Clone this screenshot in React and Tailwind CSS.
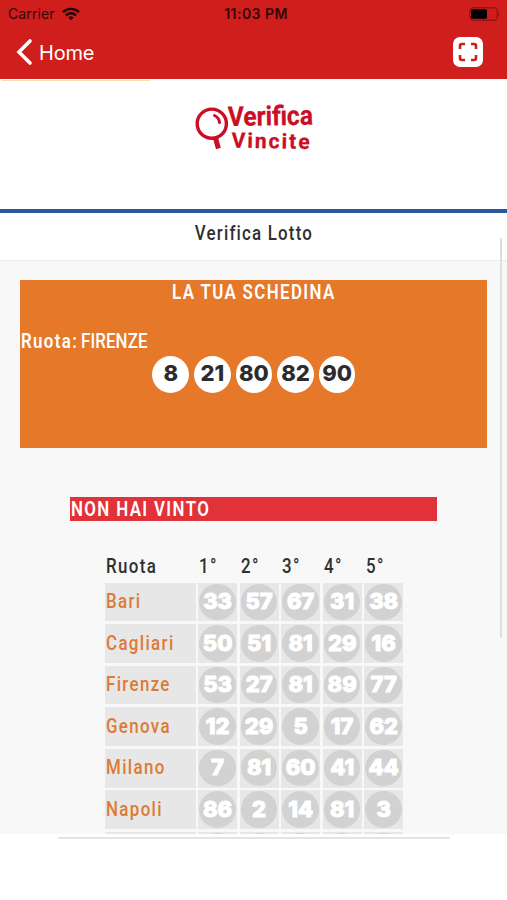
import React from "react";

const rows = [
  ["Bari", [33, 57, 67, 31, 38]],
  ["Cagliari", [50, 51, 81, 29, 16]],
  ["Firenze", [53, 27, 81, 89, 77]],
  ["Genova", [12, 29, 5, 17, 62]],
  ["Milano", [7, 81, 60, 41, 44]],
  ["Napoli", [86, 2, 14, 81, 3]],
  ["", ["", "", "", "", ""]],
];

function Condensed({ children, className = "" }) {
  return (
    <span className={`inline-block whitespace-nowrap font-['Roboto',sans-serif] text-[20px] leading-6 tracking-[1.6px] scale-x-[0.845] ${className}`}>
      {children}
    </span>
  );
}

function StatusBar() {
  return (
    <div className="flex h-[27px] items-center justify-between pl-[8px] pr-[6px] text-[#360606]">
      <div className="flex w-[120px] items-center gap-[7px]">
        <span className="text-[14px] tracking-[0.1px]">Carrier</span>
        <svg width="18" height="14" viewBox="0 0 18 14" fill="none" stroke="#260505" strokeWidth="2.4">
          <path d="M1 5.2C5.4 .8 12.6 .8 17 5.2" />
          <path d="M4 8.4C6.8 5.6 11.2 5.6 14 8.4" />
          <path d="M6.3 10.4Q9 8.2 11.7 10.4L9 13.2Z" fill="#260505" stroke="none" />
        </svg>
      </div>
      <span className="pl-[3px] text-[14px] font-semibold tracking-[0.45px]">11:03 PM</span>
      <div className="flex w-[120px] justify-end">
        <svg width="32" height="14" viewBox="0 0 32 14">
          <rect x=".8" y=".8" width="27.5" height="12.4" rx="3" fill="none" stroke="#7b1110" strokeWidth="1" />
          <rect x="2" y="2.2" width="16" height="9.6" rx="1.5" fill="#000" />
          <path d="M29.6 4.8Q31.6 7 29.6 9.2Z" fill="#7b1110" />
        </svg>
      </div>
    </div>
  );
}

export default function App() {
  return (
    <div className="flex h-[900px] w-[507px] flex-col overflow-hidden bg-white font-['Inter',sans-serif]">
      <header className="h-[79px] shrink-0 bg-[#cf1e1b]">
        <StatusBar />
        <div className="flex h-[50px] items-center pl-[16px] pr-[24px] text-white">
          <svg width="17" height="28" viewBox="0 0 17 28" fill="none" stroke="white" strokeWidth="3.6" strokeLinecap="round">
            <path d="M14 3L3 14L14 25" />
          </svg>
          <span className="ml-[6px] pt-px text-[20px] tracking-[-0.2px]">Home</span>
          <div className="ml-auto flex size-[30px] items-center justify-center rounded-[7px] bg-white">
            <svg width="20" height="20" viewBox="0 0 20 20" fill="none" stroke="#cf1e1b" strokeWidth="2.6">
              <path d="M2 7V4Q2 2 4 2H7M13 2H16Q18 2 18 4V7M18 13V16Q18 18 16 18H13M7 18H4Q2 18 2 16V13" />
            </svg>
          </div>
        </div>
      </header>

      <div className="h-[130px] shrink-0">
        <div className="ml-[2px] mt-px h-px w-[148px] bg-[#f3e0b8]" />
        <svg className="ml-[194px] mt-[9px] overflow-visible" width="128" height="74" viewBox="0 -8 128 74">
          <g fill="none" stroke="#ca0e25" strokeLinecap="round">
            <circle cx="17.8" cy="25.7" r="14.6" strokeWidth="3.4" />
            <path d="M21.5 40L24.4 50.5" strokeWidth="5" strokeLinecap="butt" />
            <path d="M20.5 17.5Q25 19.5 25.5 24.5" strokeWidth="3" />
          </g>
          <g fill="#ca0e25" stroke="#ca0e25" strokeLinejoin="round" fontFamily="Roboto, sans-serif" fontWeight="700">
            <text x="34" y="28" fontSize="27" strokeWidth=".3" textLength="85" lengthAdjust="spacingAndGlyphs" transform="rotate(-1 34 28)">Verifica</text>
            <text x="37.5" y="49.5" fontSize="21" strokeWidth=".3" textLength="78" lengthAdjust="spacing" transform="rotate(1 37 50)">Vincite</text>
          </g>
        </svg>
      </div>

      <div className="h-[4px] shrink-0 bg-[#2857a0]" />
      <h1 className="flex h-[48px] shrink-0 justify-center border-b border-[#ececec] pt-[7.5px] text-[#303030]">
        <Condensed className="font-medium !tracking-[1.4px]">Verifica Lotto</Condensed>
      </h1>

      <main className="relative h-[573px] shrink-0 bg-[#f8f8f8]">
        <div className="h-full overflow-hidden pt-[18.5px]">
          <section className="ml-[20.4px] h-[168px] w-[467px] bg-[#e57829] text-white">
            <h2 className="flex justify-center">
              <Condensed className="font-semibold">LA TUA SCHEDINA</Condensed>
            </h2>
            <div className="mt-[25px] flex h-6 pl-[0.6px]">
              <Condensed className="w-[60px] origin-left font-semibold">Ruota:</Condensed>
              <Condensed className="origin-left font-medium !tracking-[0.1px]">FIRENZE</Condensed>
            </div>
            <div className="mt-[3.5px] flex justify-center gap-[5.1px]">
              {[8, 21, 80, 82, 90].map((n) => (
                <span key={n} className="flex size-[36.5px] items-center justify-center rounded-full bg-white pb-[2px] text-[22px] font-extrabold leading-none text-[#2b2b2e]">
                  {n}
                </span>
              ))}
            </div>
          </section>

          <div className="ml-[70.4px] mt-[49px] h-[24.5px] w-[366.5px] bg-[#e23239] pl-[0.6px] text-white">
            <Condensed className="origin-left font-semibold">NON HAI VINTO</Condensed>
          </div>

          <div className="ml-[105px] mt-[32.5px] grid w-[298px] grid-cols-[90.5px_repeat(5,38.9px)] gap-x-[2.7px]">
            {["Ruota", "1°", "2°", "3°", "4°", "5°"].map((h) => (
              <div key={h} className="h-[29px] pl-px text-[#303030]">
                <Condensed className="origin-left font-medium">{h}</Condensed>
              </div>
            ))}
          </div>
          <div className="ml-[105px] grid w-[298px] grid-cols-[90.5px_repeat(5,38.9px)] gap-[2.65px]">
            {rows.map(([name, nums]) => (
              <React.Fragment key={name}>
                <div className="h-[38.9px] bg-[#e7e7e7] pl-[1px] pt-[6.5px] text-[#dd7a35]">
                  <Condensed className="origin-left font-medium">{name}</Condensed>
                </div>
                {nums.map((n, i) => (
                  <div key={i} className="flex h-[38.9px] items-center justify-center bg-[#e7e7e7]">
                    <span className="flex size-[36.5px] items-center justify-center rounded-full bg-[#d2d2d2] pb-[1.5px] text-[22px] font-extrabold leading-none text-white [-webkit-text-stroke:1px_white]">
                      {n}
                    </span>
                  </div>
                ))}
              </React.Fragment>
            ))}
          </div>
        </div>
        <div className="absolute right-[5px] top-[-23px] h-[400px] w-[2px] rounded-full bg-[#dedede]" />
      </main>
      <div className="ml-[58px] mt-[3px] h-[2px] w-[392px] shrink-0 rounded-full bg-[#e4e4e4]" />
    </div>
  );
}
